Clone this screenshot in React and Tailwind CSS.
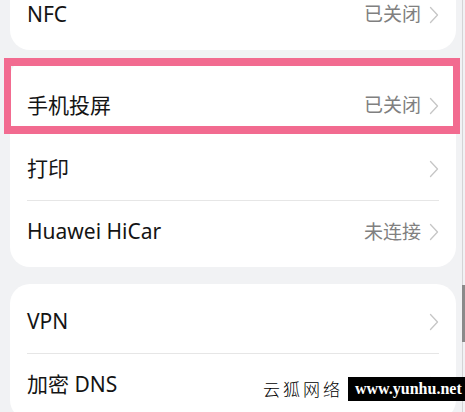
import React from "react";

const font = { fontFamily: '"Noto Sans", "Noto Sans CJK SC", sans-serif' };

function Chevron() {
  return (
    <svg width="10" height="18" viewBox="0 0 10 18" className="shrink-0">
      <path d="M1.5 1.5 L8.5 9 L1.5 16.5" fill="none" stroke="#c6c6c6" strokeWidth="1.3" strokeLinecap="round" strokeLinejoin="round" />
    </svg>
  );
}

function Row({ title, status, divider }) {
  return (
    <div className="px-[17px]">
      <div className={`flex h-[63px] items-center justify-between ${divider ? "border-t border-[#e6e6e6]" : ""}`}>
        <span className="text-[21px] font-normal text-[#141414]">{title}</span>
        <div className="flex items-center gap-[8px]">
          {status && <span className="text-[19px] text-[#808080]">{status}</span>}
          <Chevron />
        </div>
      </div>
    </div>
  );
}

export default function App() {
  return (
    <div className="relative h-[412px] w-[465px] overflow-hidden bg-[#f1f2f4]" style={font}>
      <div className="ml-[10px] w-[446px]">
        {/* card 1, top cut off */}
        <div className="mt-[-29px] rounded-[20px] bg-white pb-[4px] pt-[12px]">
          <Row title="NFC" status="已关闭" />
        </div>

        <div className="mt-[8px] rounded-[20px] bg-white pb-[4px] pt-[16px]">
          <Row title="手机投屏" status="已关闭" />
          <Row title="打印" />
          <Row title="Huawei HiCar" status="未连接" divider />
        </div>

        <div className="mt-[17px] rounded-[20px] bg-white pb-[4px] pt-[6px]">
          <Row title="VPN" />
          <Row title="加密 DNS" divider />
        </div>
      </div>

      {/* highlight box */}
      <div className="absolute left-[4px] top-[58px] h-[76px] w-[456px] border-x-[7px] border-y-[8px] border-[#f26b90]" />

      {/* right edge / scrollbar */}
      <div className="absolute right-[2px] top-0 h-full w-px bg-[#d4d4d6]" />
      <div className="absolute right-0 top-[285px] h-[57px] w-[3px] bg-[#8a8a8a]" />

      {/* watermark */}
      <div className="absolute left-[263px] top-[376px] flex items-center gap-[5px]">
        <span className="text-[17px] tracking-[3px] text-black" style={{ fontFamily: '"Noto Sans CJK SC", sans-serif', fontWeight: 300 }}>云狐网络</span>
        <span className="flex h-[24px] w-[117px] items-center bg-black pl-[7px] text-[16px] font-bold text-white" style={{ fontFamily: '"Liberation Serif", serif' }}>www.yunhu.net</span>
      </div>
    </div>
  );
}
